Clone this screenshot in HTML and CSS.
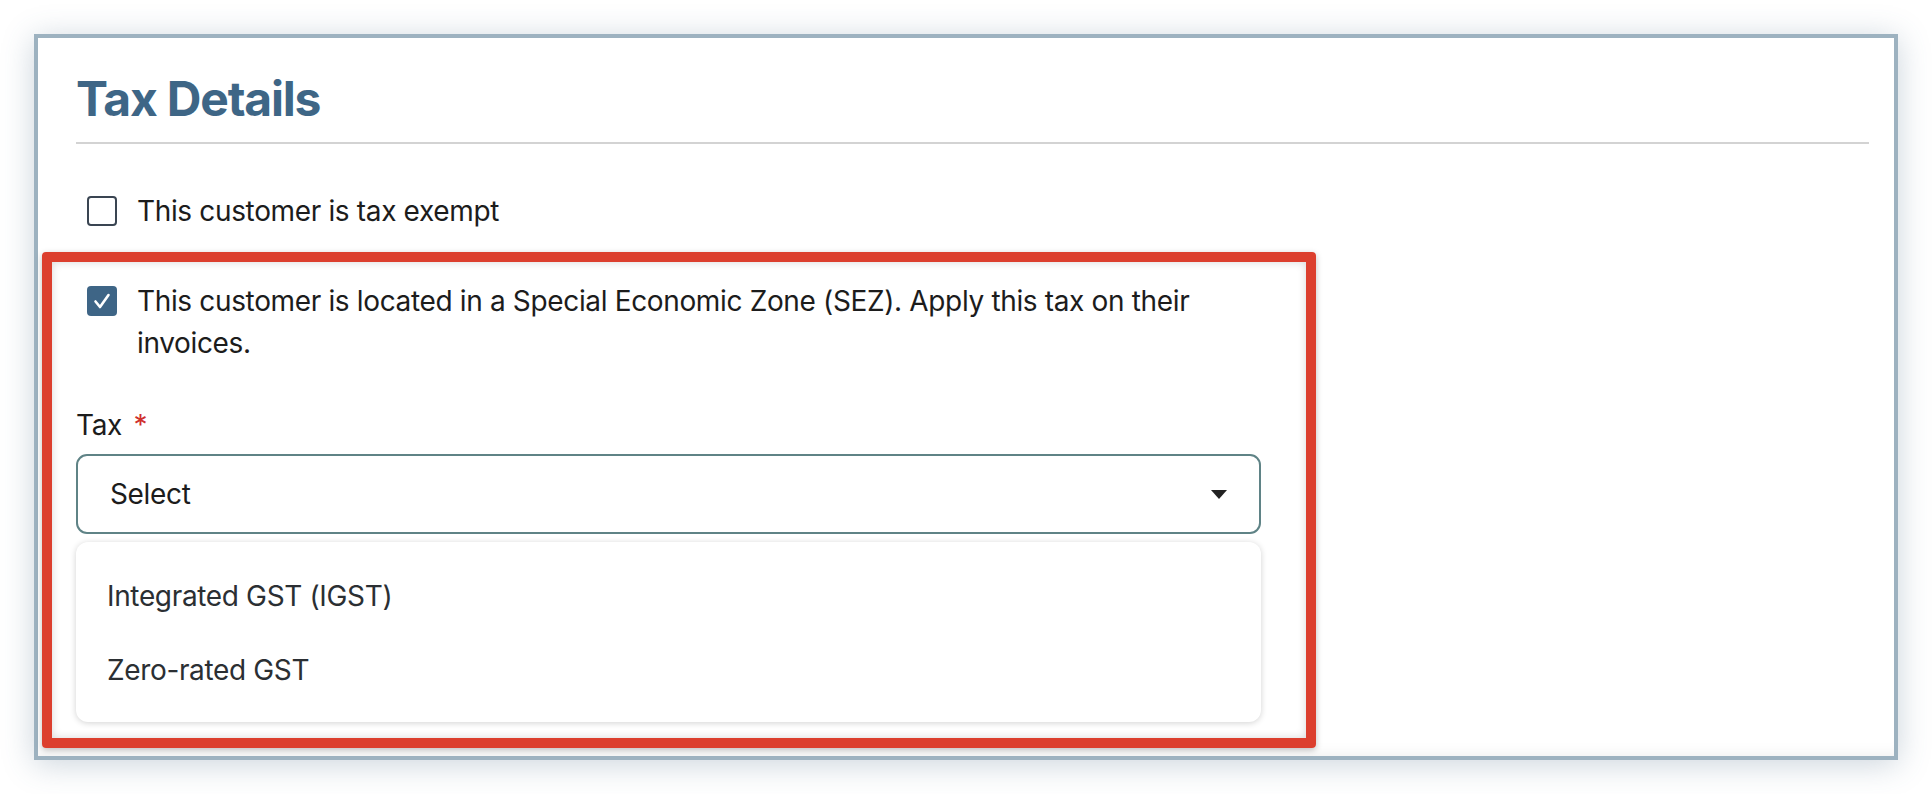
FILE: index.html
```html
<!DOCTYPE html>
<html lang="en">
<head>
    <meta charset="UTF-8">
    <meta name="viewport" content="width=device-width, initial-scale=1.0">
    <title>Tax Details</title>
    <link rel="stylesheet" href="styles.css">
</head>
<body>
    <div class="panel">
        <h1 class="panel-title">Tax Details</h1>

        <label class="check-row">
            <span class="checkbox"></span>
            <span class="check-text">This customer is tax exempt</span>
        </label>

        <div class="highlight">
            <label class="check-row">
                <span class="checkbox checked">
                    <svg width="30" height="30" viewBox="0 0 30 30">
                        <polyline points="8.5,15.5 13,21 21.5,9" fill="none" stroke="#fff" stroke-width="2.6" stroke-linecap="round" stroke-linejoin="round"/>
                    </svg>
                </span>
                <span class="check-text">This customer is located in a Special Economic Zone (SEZ). Apply this tax on their invoices.</span>
            </label>

            <div class="field">
                <div class="field-label">Tax <span class="required">*</span></div>
                <div class="select">
                    <span>Select</span>
                    <svg class="caret" width="16" height="9" viewBox="0 0 16 9">
                        <polygon points="0,0 16,0 8,9" fill="#222"/>
                    </svg>
                </div>
                <ul class="options">
                    <li>Integrated GST (IGST)</li>
                    <li>Zero-rated GST</li>
                </ul>
            </div>
        </div>
    </div>
</body>
</html>
```

FILE: styles.css
```css
body {
    margin: 0;
    background: #fff;
    font-family: Inter, "Noto Sans", sans-serif;
    color: #1c1c1c;
    letter-spacing: -0.35px;
}
.panel {
    margin: 34px;
    height: 726px;
    box-sizing: border-box;
    border: 4px solid #9db2c0;
    background: #fff;
    padding: 32px 25px 0 38px;
    box-shadow: 0 4px 30px rgba(70, 100, 130, 0.28), inset 0 -14px 16px -14px rgba(0, 0, 0, 0.08);
}
.panel-title {
    margin: 0;
    font-size: 48px;
    line-height: 58px;
    font-weight: 700;
    color: #3e6686;
    letter-spacing: -1.2px;
    padding-bottom: 14px;
    border-bottom: 2px solid #d3d3d3;
}
.check-row {
    display: flex;
    align-items: flex-start;
    gap: 20px;
    padding-left: 11px;
    font-size: 28px;
    line-height: 42px;
}
.panel > .check-row {
    margin-top: 46px;
}
.checkbox {
    flex: none;
    width: 30px;
    height: 30px;
    margin-top: 6px;
    box-sizing: border-box;
    border: 2px solid #3a4552;
    border-radius: 4px;
}
.checkbox.checked {
    border: none;
    background: #3e6586;
}
.checkbox svg {
    display: block;
}
.highlight {
    margin: 20px 0 0 -34px;
    width: 1274px;
    box-sizing: border-box;
    border: 10px solid #dc3f2e;
    border-radius: 4px;
    padding: 18px 45px 16px 24px;
    box-shadow: 0 2px 6px rgba(0, 0, 0, 0.25), inset 0 0 8px rgba(0, 0, 0, 0.16);
}
.field {
    margin-top: 40px;
}
.field-label {
    font-size: 28px;
    line-height: 42px;
}
.required {
    color: #d0312d;
    margin-left: 4px;
}
.select {
    margin-top: 8px;
    height: 80px;
    box-sizing: border-box;
    border: 2px solid #5f8386;
    border-radius: 11px;
    display: flex;
    align-items: center;
    justify-content: space-between;
    padding: 0 32px 0 32px;
    font-size: 28px;
}
.caret {
    display: block;
}
.options {
    list-style: none;
    margin: 8px 0 0;
    padding: 17px 0 15px;
    border-radius: 12px;
    background: #fff;
    box-shadow: 0 1px 6px rgba(0, 0, 0, 0.18);
    font-size: 28px;
    line-height: 42px;
    color: #2b2f33;
}
.options li {
    padding: 16px 31px;
}
```
